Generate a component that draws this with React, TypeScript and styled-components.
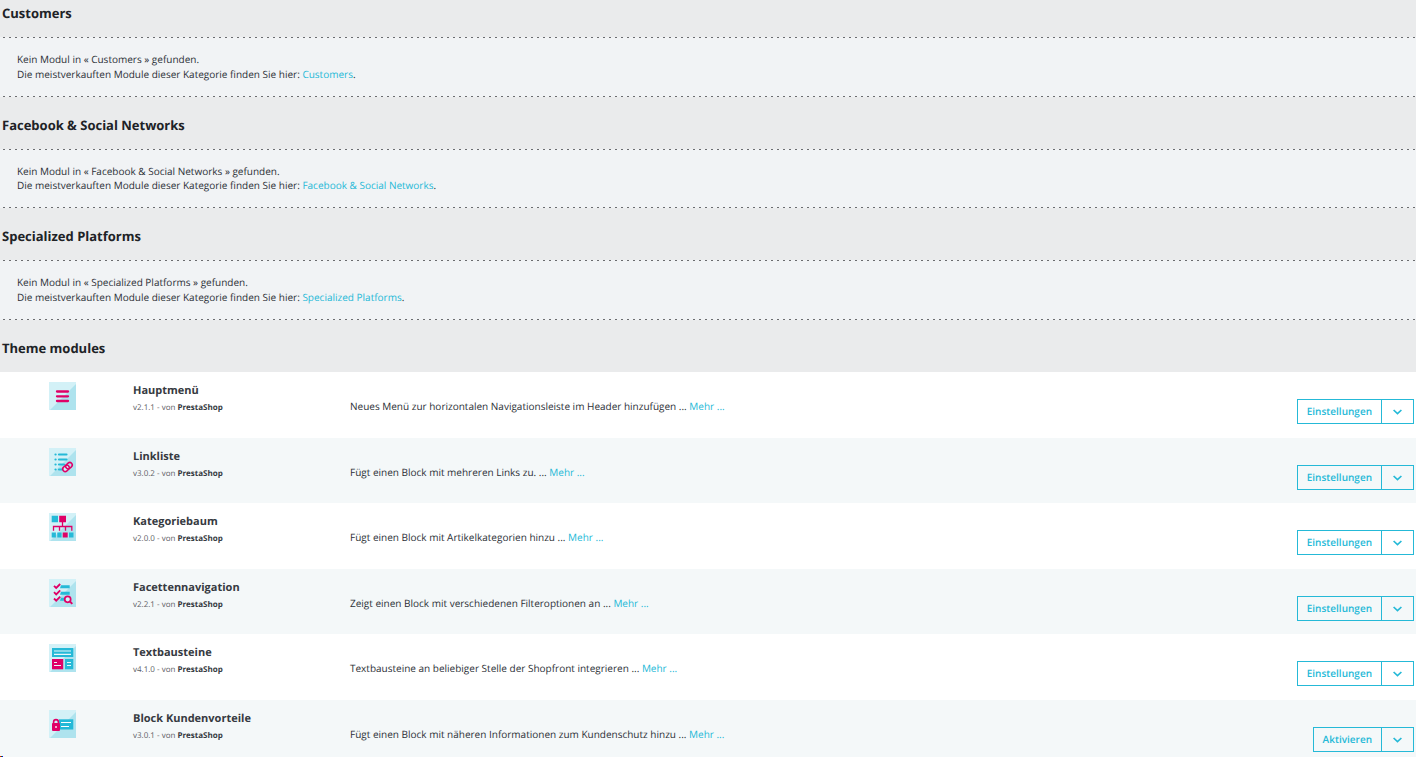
import React from "react";
import styled, { createGlobalStyle } from "styled-components";

const accent = "#25b9d7";
const pink = "#df0067";

const GlobalStyle = createGlobalStyle`
  * { box-sizing: border-box; }
  body {
    margin: 0;
    min-height: 100vh;
    overflow: hidden;
    background: #eaebec;
    color: #2c3036;
    font-family: "Open Sans", "Noto Sans", sans-serif;
    font-size: 10px;
    line-height: 15px;
    text-rendering: geometricPrecision;
  }
`;

const Page = styled.main`
  display: flex;
  flex-direction: column;
`;

const Section = styled.section`
  &:nth-of-type(even) p { line-height: 14px; }
  &:nth-of-type(even) p + p { line-height: 15px; }
`;

const SectionTitle = styled.h2<{ $first?: boolean }>`
  display: flex;
  align-items: center;
  height: ${(p) => (p.$first ? 37 : 52)}px;
  margin: 0;
  padding: ${(p) => (p.$first ? "0 2px 12px" : "3px 2px 0")};
  color: #202226;
  font-size: 13px;
  line-height: 18px;
  font-weight: 700;
`;

const dashes = "repeating-linear-gradient(90deg, #6b6c6f 0 2px, transparent 2px 6px)";

const EmptyPanel = styled.div`
  padding: 15px 17px;
  background: ${dashes} 3px 0 / 100% 1px no-repeat, ${dashes} 3px 100% / 100% 1px no-repeat, #f1f3f5;
`;

const Line = styled.p`
  margin: 0;
`;

const Link = styled.a`
  color: ${accent};
  text-decoration: none;
`;

const ModuleList = styled.ul`
  margin: 0;
  padding: 0;
  list-style: none;
`;

const ModuleRow = styled.li`
  display: grid;
  grid-template-columns: 133px 217px 1fr auto;
  align-items: start;
  height: 66px;
  padding-right: 2px;
  background: #fff;
  &:nth-child(even) {
    height: 65px;
    background: #f4f8f9;
  }
`;

const Logo = styled.svg`
  display: block;
  width: 27px;
  height: 28px;
  margin: 10px 0 0 49px;
`;

const ModuleName = styled.h3`
  margin: 11px 0 0;
  color: #363a41;
  font-size: 11px;
  line-height: 16px;
  font-weight: 700;
`;

const Meta = styled.p`
  margin: 3px 0 0;
  color: #5c6065;
  font-size: 8px;
  line-height: 12px;
  b { color: #363a41; }
`;

const Description = styled.p`
  margin: 27px 0 0;
`;

const Actions = styled.div`
  display: flex;
  margin-top: 27px;
`;

const ActionButton = styled.button`
  height: 25px;
  padding: 0 9px;
  border: 1px solid ${accent};
  background: transparent;
  color: ${accent};
  font: 600 10px/15px "Open Sans", "Noto Sans", sans-serif;
  text-rendering: inherit;
  cursor: pointer;
`;

const ToggleButton = styled(ActionButton)`
  display: flex;
  align-items: center;
  justify-content: center;
  width: 33px;
  margin-left: -1px;
  padding: 1px 0 0;
`;

const CornerMark = styled.span`
  position: fixed;
  left: 0;
  bottom: 0;
  width: 3px;
  height: 1px;
  background: linear-gradient(90deg, #f00 0 1px, #080 1px 2px, #00f 2px 3px);
`;

const Chevron = () => (
  <svg width="9" height="6" viewBox="0 0 9 6" fill="none" stroke={accent} strokeWidth="1.7" aria-hidden="true">
    <path d="M0.6 1 L4.5 4.6 L8.4 1" />
  </svg>
);

const art: Record<string, React.ReactNode> = {
  menu: (
    <path d="M8 9.500h11M8 14.300h11M8 19h11" stroke={pink} strokeWidth="2.300" strokeLinecap="round" />
  ),
  links: (
    <>
      <path d="M10 6.500h7.500M10 11.500h7.500M10 16.500h5M10 21.500h3.500" stroke={accent} strokeWidth="2.200" strokeLinecap="round" />
      <path d="M6.500 6.500h.1M6.500 11.500h.1M6.500 16.500h.1M6.500 21.500h.1" stroke={accent} strokeWidth="2.200" strokeLinecap="round" />
      <g fill="#d3f1f7" stroke={pink} strokeWidth="1.500" transform="rotate(-42 18.5 19)">
        <rect x="13" y="16.500" width="7" height="5" rx="2.500" />
        <rect x="17" y="16.500" width="7" height="5" rx="2.500" fill="none" />
      </g>
    </>
  ),
  tree: (
    <>
      <path d="M2.700 2.700H9v6.600H2.700zM2.700 19.500h4.200v5H2.700zM8.300 19.500h4.300v5H8.300zM20 19.500h4.500v5H20z" fill={accent} />
      <path d="M10.200 2.700H17v6.600h-6.800zM13.700 19.500h5v5h-5z" fill={pink} />
      <path d="M13.500 9v4.500M4.500 17.700v-4.200h18.300v4.200M10.500 13.500v4.200M16.500 13.500v4.200" fill="none" stroke={pink} strokeWidth="1.300" />
    </>
  ),
  facets: (
    <>
      <path d="M12 6.200h8.700v3H11zM12 12.700h8.700v3H11zM12 18.700h4v3h-5z" fill={accent} />
      <path d="M5 6.800l2.200 2.200 4-4M5 13.200l2.200 2.200 4-4M5 19.500l2.200 2.200 4-4" fill="none" stroke={pink} strokeWidth="1.800" />
      <circle cx="18.700" cy="20.300" r="3" fill="#d3f1f7" stroke={pink} strokeWidth="1.700" />
      <path d="M20.900 22.500l2.400 2.400" stroke={pink} strokeWidth="1.900" />
    </>
  ),
  blocks: (
    <>
      <path d="M3 4h21.300v9H3zM16 15h8.300v10.300H16z" fill={accent} />
      <path d="M3 15h11.200v10.300H3z" fill={pink} />
      <path d="M5 7h17M5 10.300h17M18 18.500h4M18 21.500h4M5 18.500h3M5 21.500h7" stroke="#e8f8fb" strokeWidth="1.200" />
    </>
  ),
  lock: (
    <>
      <path d="M10 9.300h14.300v10.200H10z" fill={accent} />
      <path d="M12 12.500h10M12 16.500h8" stroke="#fff" strokeWidth="1.200" />
      <path d="M4.600 14v-2a2.400 2.400 0 0 1 4.800 0v2" fill="none" stroke={pink} strokeWidth="1.600" />
      <rect x="3" y="13" width="8" height="8" rx="1" fill={pink} />
      <path d="M7 16v2" stroke="#fff" strokeWidth="1.300" />
    </>
  ),
};

const ModuleLogo = ({ kind }: { kind: string }) => (
  <Logo viewBox="0 0 27 28" aria-hidden="true">
    <path d="M0 0h27v28H0z" fill="#d3f1f7" />
    <path d="M27 2v26H1z" fill="#aee3ee" />
    {art[kind]}
  </Logo>
);

const categories = ["Customers", "Facebook & Social Networks", "Specialized Platforms"];

const modules = [
  { kind: "menu", name: "Hauptmenü", version: "v2.1.1", text: "Neues Menü zur horizontalen Navigationsleiste im Header hinzufügen ...", action: "Einstellungen" },
  { kind: "links", name: "Linkliste", version: "v3.0.2", text: "Fügt einen Block mit mehreren Links zu. ...", action: "Einstellungen" },
  { kind: "tree", name: "Kategoriebaum", version: "v2.0.0", text: "Fügt einen Block mit Artikelkategorien hinzu ...", action: "Einstellungen" },
  { kind: "facets", name: "Facettennavigation", version: "v2.2.1", text: "Zeigt einen Block mit verschiedenen Filteroptionen an ...", action: "Einstellungen" },
  { kind: "blocks", name: "Textbausteine", version: "v4.1.0", text: "Textbausteine an beliebiger Stelle der Shopfront integrieren ...", action: "Einstellungen" },
  { kind: "lock", name: "Block Kundenvorteile", version: "v3.0.1", text: "Fügt einen Block mit näheren Informationen zum Kundenschutz hinzu ...", action: "Aktivieren" },
];

export default function App() {
  return (
    <Page>
      <GlobalStyle />
      {categories.map((name, i) => (
        <Section key={name}>
          <SectionTitle $first={i === 0}>{name}</SectionTitle>
          <EmptyPanel>
            <Line>Kein Modul in « {name} » gefunden.</Line>
            <Line>
              Die meistverkauften Module dieser Kategorie finden Sie hier: <Link href="#">{name}</Link>.
            </Line>
          </EmptyPanel>
        </Section>
      ))}
      <section>
        <SectionTitle>Theme modules</SectionTitle>
        <ModuleList>
          {modules.map((m) => (
            <ModuleRow key={m.name}>
              <ModuleLogo kind={m.kind} />
              <div>
                <ModuleName>{m.name}</ModuleName>
                <Meta>
                  {m.version} - von <b>PrestaShop</b>
                </Meta>
              </div>
              <Description>
                {m.text} <Link href="#">Mehr ...</Link>
              </Description>
              <Actions>
                <ActionButton type="button">{m.action}</ActionButton>
                <ToggleButton type="button" aria-label={`Weitere Aktionen für ${m.name}`}>
                  <Chevron />
                </ToggleButton>
              </Actions>
            </ModuleRow>
          ))}
        </ModuleList>
      </section>
      <CornerMark />
    </Page>
  );
}
